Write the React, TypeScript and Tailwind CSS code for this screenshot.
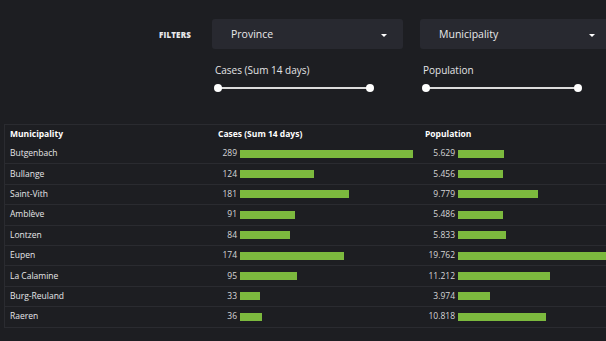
import React from "react";

type Row = { name: string; cases: number; population: number };

const ROWS: Row[] = [
  { name: "Butgenbach", cases: 289, population: 5629 },
  { name: "Bullange", cases: 124, population: 5456 },
  { name: "Saint-Vith", cases: 181, population: 9779 },
  { name: "Amblève", cases: 91, population: 5486 },
  { name: "Lontzen", cases: 84, population: 5833 },
  { name: "Eupen", cases: 174, population: 19762 },
  { name: "La Calamine", cases: 95, population: 11212 },
  { name: "Burg-Reuland", cases: 33, population: 3974 },
  { name: "Raeren", cases: 36, population: 10818 },
];

const formatNumber = (value: number) =>
  value >= 1000 ? `${Math.floor(value / 1000)}.${String(value % 1000).padStart(3, "0")}` : String(value);

export default function App() {
  return (
    <div className="h-[341px] w-[606px] overflow-hidden bg-[#1d1e22] font-['Open_Sans',sans-serif] text-[#e4e4e6]">
      <div className="flex items-center pt-[19px]">
        <div className="w-[212px] shrink-0 pr-[21px] pt-[1px] text-right text-[8px] font-extrabold tracking-[0.02em] text-[#e8e8ea]">
          FILTERS
        </div>
        <Dropdown label="Province" />
        <div className="w-[17px] shrink-0" />
        <Dropdown label="Municipality" />
      </div>

      <div className="flex pt-[14px]">
        <div className="w-[212px] shrink-0" />
        <RangeSlider label="Cases (Sum 14 days)" />
        <div className="w-[15px] shrink-0" />
        <RangeSlider label="Population" />
      </div>

      <div className="ml-[4px] mt-[32px] border-l border-t border-[#2a2b30]">
        <div className="flex h-[19px] items-center text-[8.5px] font-bold text-white">
          <div className="w-[209px] shrink-0 pl-[5px]">Municipality</div>
          <div className="w-[207px] shrink-0 pl-[4px]">Cases (Sum 14 days)</div>
          <div className="pl-[4px]">Population</div>
        </div>
        {ROWS.map((row) => (
          <div key={row.name} className="flex h-[20.4px] items-center border-b border-[#2a2b30] text-[8.5px]">
            <div className="w-[209px] shrink-0 pl-[5px] text-[#e6e6e8]">{row.name}</div>
            <div className="flex w-[207px] shrink-0 items-center">
              <span className="w-[23px] text-right text-[#d6d6d8]">{row.cases}</span>
              <div className="ml-[3px] h-[8px] bg-[#7cb93e]" style={{ width: row.cases * 0.6 }} />
            </div>
            <div className="flex items-center">
              <span className="w-[34px] text-right text-[#d6d6d8]">{formatNumber(row.population)}</span>
              <div className="ml-[3px] h-[8px] shrink-0 bg-[#7cb93e]" style={{ width: row.population * 0.00817 }} />
            </div>
          </div>
        ))}
      </div>
    </div>
  );
}

function Dropdown({ label }: { label: string }) {
  return (
    <div className="flex h-[30px] w-[191px] shrink-0 items-center justify-between rounded-[3px] bg-[#282930] pl-[19px] pr-[16px] pt-[2px]">
      <span className="text-[10.5px] text-[#e8e8ea]">{label}</span>
      <span className="h-0 w-0 border-x-[3px] border-t-[3px] border-x-transparent border-t-white" />
    </div>
  );
}

function RangeSlider({ label }: { label: string }) {
  return (
    <div className="w-[193px] shrink-0">
      <div className="pl-[3px] text-[10px] text-[#e4e4e6]">{label}</div>
      <div className="relative mt-[6px] ml-[6px] h-[8px] w-[152px]">
        <div className="absolute left-0 right-0 top-[3px] h-[2px] bg-[#dcdcdc]" />
        <div className="absolute left-[-4px] top-0 h-[8px] w-[8px] rounded-full bg-white" />
        <div className="absolute right-[-4px] top-0 h-[8px] w-[8px] rounded-full bg-white" />
      </div>
    </div>
  );
}
